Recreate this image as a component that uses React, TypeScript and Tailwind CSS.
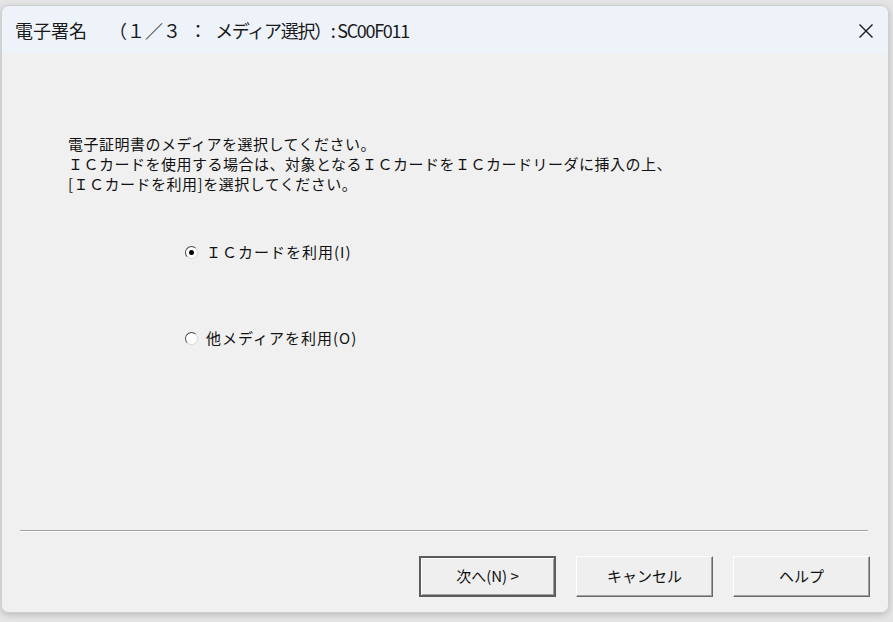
import React from 'react';

const font = { fontFamily: '"Noto Sans CJK JP", "Noto Sans", sans-serif' };

function Radio({ checked, label }: { checked?: boolean; label: string }) {
  return (
    <label className="flex items-center h-[20px] gap-[8px]">
      <span className="w-[13px] h-[13px] rounded-full bg-white border border-t-[#4a4a4a] border-l-[#4a4a4a] border-r-[#d8d8d8] border-b-[#d8d8d8] flex items-center justify-center">
        {checked && <span className="w-[5px] h-[5px] rounded-full bg-black" />}
      </span>
      <span className="text-[15px] tracking-[1px] text-[#111]">{label}</span>
    </label>
  );
}

function DialogButton({ label, primary }: { label: string; primary?: boolean }) {
  return (
    <button
      className={
        'w-[137px] h-[41px] bg-[#efefef] text-[15px] text-[#111] ' +
        (primary
          ? 'border-2 border-[#5c5c5c] shadow-[inset_1px_1px_0_#fff,inset_-1px_-1px_0_#a0a0a0]'
          : 'border border-t-white border-l-white border-r-[#6a6a6a] border-b-[#6a6a6a] shadow-[inset_-1px_-1px_0_#a0a0a0]')
      }
    >
      {label}
    </button>
  );
}

export default function App() {
  return (
    <div className="w-[893px] h-[622px] bg-[#e4e4e4] pt-[5px] pl-[1px] pr-[4px] pb-[9px]" style={font}>
      <div className="w-full h-full flex flex-col rounded-[8px] overflow-hidden border border-[#cfcfcf] shadow-[0_2px_6px_rgba(0,0,0,0.18)]">
        <div className="h-[48px] bg-[#eef3fa] flex items-center justify-between pl-[13px] pr-[14px]">
          <span className="text-[18px] text-[#1a1a1a] whitespace-pre">
            電子署名　 （１／３  ：  <span className="tracking-[-1.3px]">メディア選択）: SC00F011</span>
          </span>
          <svg width="16" height="16" viewBox="0 0 16 16" className="mt-[2px]">
            <path d="M1.5 1.5 L14.5 14.5 M14.5 1.5 L1.5 14.5" stroke="#1a1a1a" strokeWidth="1.4" fill="none" />
          </svg>
        </div>
        <div className="flex-1 bg-[#f0f0f0] flex flex-col">
          <div className="pl-[66px] pt-[80px] text-[15px] leading-[20px] tracking-[0.5px] text-[#111]">
            <p>電子証明書のメディアを選択してください。</p>
            <p>ＩＣカードを使用する場合は、対象となるＩＣカードをＩＣカードリーダに挿入の上、</p>
            <p>[ＩＣカードを利用]を選択してください。</p>
          </div>
          <div className="pl-[183px] mt-[48px] flex flex-col gap-[66px]">
            <Radio checked label="ＩＣカードを利用(I)" />
            <Radio label="他メディアを利用(O)" />
          </div>
          <div className="flex-1" />
          <div className="ml-[18px] mr-[20px] h-[2px] border-t border-[#a0a0a0] border-b border-b-white" />
          <div className="flex justify-end gap-[20px] pr-[18px] pt-[24px] pb-[15px]">
            <DialogButton primary label="次へ(N) >" />
            <DialogButton label="キャンセル" />
            <DialogButton label="ヘルプ" />
          </div>
        </div>
      </div>
    </div>
  );
}
